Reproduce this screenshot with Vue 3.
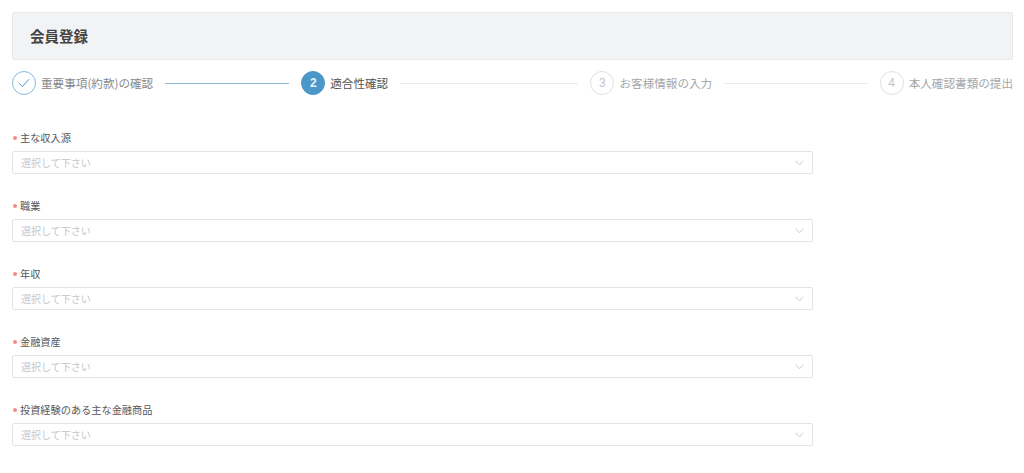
<script setup>
const steps = [
  { no: '', label: '重要事項(約款)の確認', state: 'done' },
  { no: '2', label: '適合性確認', state: 'active' },
  { no: '3', label: 'お客様情報の入力', state: 'todo' },
  { no: '4', label: '本人確認書類の提出', state: 'todo' },
]
const fields = ['主な収入源', '職業', '年収', '金融資産', '投資経験のある主な金融商品', '投資目的']
</script>

<template>
  <div class="page">
    <header class="head">会員登録</header>
    <ol class="steps">
      <li v-for="(s, i) in steps" :key="i" class="step" :class="s.state">
        <span class="dot">
          <svg v-if="s.state === 'done'" width="12" height="10" viewBox="0 0 12 10" fill="none">
            <path d="M1 5.2 4.4 8.6 11 1.2" stroke="#4a97c9" stroke-width="1" />
          </svg>
          <template v-else>{{ s.no }}</template>
        </span>
        <span class="text">{{ s.label }}</span>
        <span v-if="i < steps.length - 1" class="line"></span>
      </li>
    </ol>
    <form class="form">
      <div v-for="f in fields" :key="f" class="field">
        <label class="label"><i class="req"></i>{{ f }}</label>
        <div class="select">
          <span>選択して下さい</span>
          <svg width="9" height="6" viewBox="0 0 9 6" fill="none">
            <path d="M.7 .8 4.5 4.8 8.3 .8" stroke="#c8cacd" stroke-width="1" />
          </svg>
        </div>
      </div>
    </form>
  </div>
</template>

<style>
html, body { margin: 0; background: #fff; overflow: hidden; }
</style>

<style scoped>
.page {
  height: 473px;
  overflow: hidden;
  padding: 12px 11px 0 12px;
  box-sizing: border-box;
  font-family: "Noto Sans CJK JP", "Liberation Sans", sans-serif;
  color: #606266;
}
.head {
  height: 48px;
  box-sizing: border-box;
  border: 1px solid #e6e8eb;
  border-radius: 2px;
  background: #f2f3f5;
  padding-left: 17px;
  font-size: 14.5px;
  font-weight: 700;
  line-height: 45px;
  color: #444;
}
.steps {
  display: flex;
  list-style: none;
  margin: 11px 0 0;
  padding: 0;
  height: 24px;
}
.step {
  display: flex;
  align-items: center;
  flex: 1 1 0;
  min-width: 0;
}
.step:last-child { flex: 0 0 auto; }
.dot {
  width: 24px;
  height: 24px;
  box-sizing: border-box;
  border-radius: 50%;
  display: flex;
  align-items: center;
  justify-content: center;
  font: 12px "Liberation Sans", sans-serif;
  border: 1px solid #dcdfe3;
  color: #c0c4cc;
  flex: none;
}
.text {
  margin-left: 5px;
  font-size: 11.6px;
  white-space: nowrap;
  color: #a4a6a9;
}
.line {
  flex: 1;
  height: 1px;
  margin: 0 12px;
  background: #e8eaec;
}
.done .dot { border-color: #82b9de; }
.done .text { color: #85878a; }
.done .line { background: #8db8d6; }
.active .dot { background: #4a97c9; border-color: #4a97c9; color: #e8f2f8; font-weight: 700; }
.active .text { color: #555; }
.form { margin-top: 32px; }
.field { height: 68px; }
.label {
  display: flex;
  align-items: center;
  height: 21px;
  margin-bottom: 3px;
  font-size: 10.2px;
  line-height: 14px;
  color: #55575b;
}
.req {
  width: 4px;
  height: 4px;
  margin: 0 3px 0 1px;
  border-radius: 50%;
  background: #f48a8a;
  flex: none;
}
.select {
  width: 801px;
  height: 23px;
  box-sizing: border-box;
  border: 1px solid #e2e4e8;
  border-radius: 2px;
  padding: 0 8px;
  display: flex;
  align-items: center;
  justify-content: space-between;
  font-size: 10px;
  color: #c4c6ca;
}
</style>
